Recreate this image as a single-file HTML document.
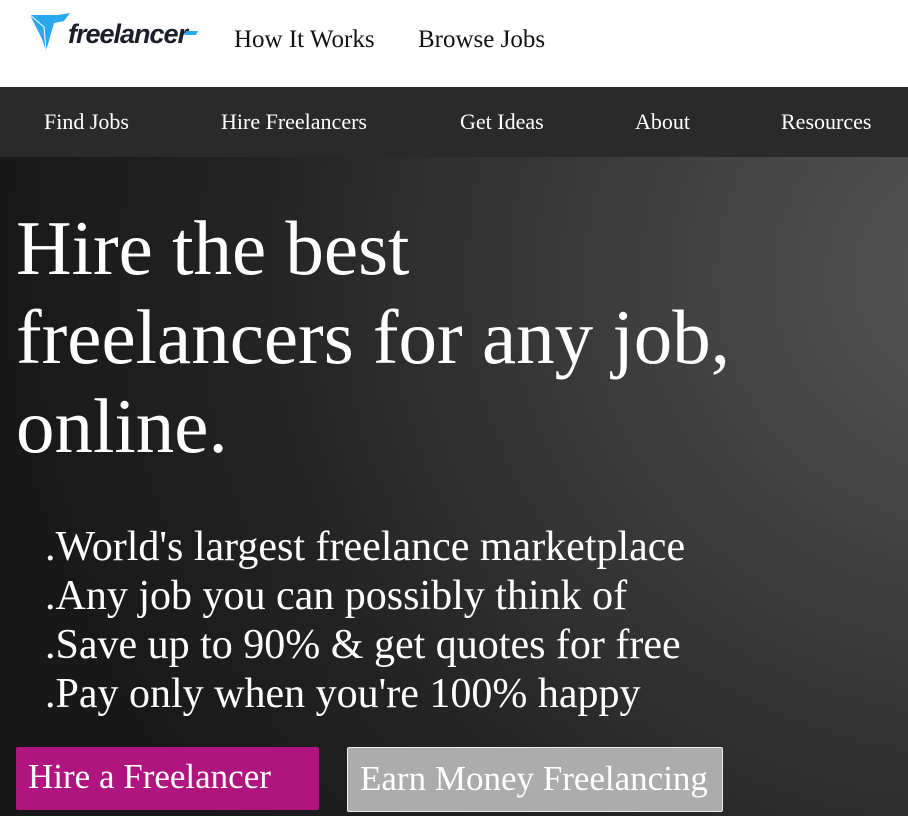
<!DOCTYPE html>
<html><head><style>
body{margin:0;width:908px;height:816px;overflow:hidden;font-family:"Liberation Serif",serif;background:#fff}
.top{height:87px;position:relative}
.top a{position:absolute;top:26px;font-size:25px;color:#111}
.nav{position:absolute;top:87px;left:0;width:908px;height:70px;background:#2a2a2a;color:#fff;font-size:22px}
.nav span{position:absolute;top:22px}
.hero{position:absolute;top:157px;left:0;width:908px;height:659px;background:radial-gradient(ellipse 1000px 900px at 1000px 120px,#565656 0%,#3c3c3c 40%,#232323 75%,#181818 100%);color:#fff}
h1{margin:0;position:absolute;left:16px;top:47px;font-weight:normal;font-size:77px;line-height:89px}
.bul{position:absolute;left:45px;top:366px;font-size:42px;line-height:49px}
.b1{position:absolute;left:16px;top:590px;width:303px;height:63px;background:#b0157f;border-radius:2px;font-size:35px;line-height:60px;box-sizing:border-box;padding-left:12px}
.b2{position:absolute;left:347px;top:590px;width:376px;height:65px;background:#acacac;border:1px solid #eee;border-radius:2px;font-size:35px;line-height:62px;box-sizing:border-box;padding-left:12px}
</style></head><body>
<div class="top">
<svg style="position:absolute;left:30px;top:13px" width="44" height="42" viewBox="0 0 44 42"><polygon points="0,2 28,2 24,10 16,38 12,26" fill="#29a7ef"/><polygon points="28,2 40,0 34,8 24,10" fill="#29a7ef"/><polyline points="0,2 14,14 16,38 M14,14 24,10" fill="none" stroke="#fff" stroke-width="1"/></svg>
<span style="position:absolute;left:68px;top:19px;font-family:'Liberation Sans',sans-serif;font-weight:bold;font-style:italic;font-size:27px;color:#1b1f2b;letter-spacing:-1px">freelancer</span>
<span style="position:absolute;left:185px;top:31px;width:12px;height:4px;background:#29a7ef;transform:skewX(-30deg)"></span>
<a style="left:234px">How It Works</a><a style="left:418px">Browse Jobs</a>
</div>
<div class="nav"><span style="left:44px">Find Jobs</span><span style="left:221px">Hire Freelancers</span><span style="left:460px">Get Ideas</span><span style="left:635px">About</span><span style="left:781px">Resources</span></div>
<div class="hero">
<h1>Hire the best<br>freelancers for any job,<br>online.</h1>
<div class="bul">.World's largest freelance marketplace<br>.Any job you can possibly think of<br>.Save up to 90% &amp; get quotes for free<br>.Pay only when you're 100% happy</div>
<div class="b1">Hire a Freelancer</div>
<div class="b2">Earn Money Freelancing</div>
</div>
</body></html>
